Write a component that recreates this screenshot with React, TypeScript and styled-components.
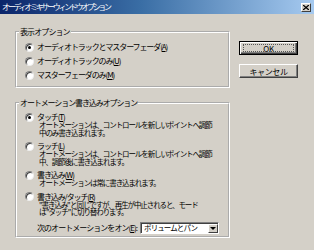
import React from "react";
import styled, { createGlobalStyle } from "styled-components";

const GlobalStyle = createGlobalStyle`
  html, body {
    margin: 0;
    padding: 0;
    background: #d4d0c8;
  }
`;

const Window = styled.div`
  width: 314px;
  height: 250px;
  background: #d4d0c8;
  font-family: "Noto Sans CJK JP", "Noto Sans", sans-serif;
  color: #000;
  overflow: hidden;
`;

const TitleBar = styled.div`
  height: 14px;
  display: flex;
  align-items: center;
  justify-content: space-between;
  padding: 0 3px 0 2px;
  background: linear-gradient(90deg, #0a246a 0%, #3a6ea5 45%, #a6caf0 100%);
  color: #fff;
  font-size: 8px;
  line-height: 14px;
  letter-spacing: -2.3px;
`;

const CloseBtn = styled.div`
  width: 10px;
  height: 9px;
  box-sizing: border-box;
  background: #d4d0c8;
  border: 1px solid;
  border-color: #fff #404040 #404040 #fff;
  display: flex;
  align-items: center;
  justify-content: center;
`;

const Body = styled.div`
  display: flex;
  align-items: flex-start;
  padding: 13px 0 0 15px;
`;

const Column = styled.div`
  display: flex;
  flex-direction: column;
  gap: 10px;
`;

const Group = styled.fieldset<{ $pb: number; $pt: number }>`
  width: 215px;
  box-sizing: border-box;
  margin: 0;
  padding: ${(p) => p.$pt}px 4px ${(p) => p.$pb}px 8px;
  border: 2px groove #fff;
  min-inline-size: 0;
`;

const Legend = styled.legend<{ $ls: number }>`
  font-size: 8px;
  line-height: 10px;
  padding: 0 1px;
  margin-left: -6px;
  letter-spacing: ${(p) => p.$ls}px;
`;

const Row = styled.div<{ $h: number }>`
  height: ${(p) => p.$h}px;
  line-height: ${(p) => p.$h}px;
  display: flex;
  align-items: center;
  gap: 3px;
  font-size: 8px;
  letter-spacing: -1.1px;
  white-space: nowrap;
`;

const Radio = styled.span<{ $on?: boolean }>`
  width: 9px;
  height: 9px;
  box-sizing: border-box;
  flex: none;
  border-radius: 50%;
  background: #fff;
  border: 1px solid;
  border-color: #808080 #eee #eee #808080;
  box-shadow: inset 1px 1px 0 #404040;
  display: flex;
  align-items: center;
  justify-content: center;

  &::after {
    content: "";
    width: 3px;
    height: 3px;
    border-radius: 50%;
    background: ${(p) => (p.$on ? "#000" : "transparent")};
  }
`;

const Item = styled.div`
  display: flex;
  flex-direction: column;
  & + & {
    margin-top: 6px;
  }
`;

const Desc = styled.div`
  margin-left: 14px;
  font-size: 7.5px;
  line-height: 7.5px;
  letter-spacing: -1.1px;
  white-space: nowrap;
`;

const NextRow = styled.div`
  margin-top: 6px;
  padding-left: 12px;
  display: flex;
  align-items: center;
  gap: 3px;
  font-size: 8px;
  line-height: 12px;
  white-space: nowrap;
`;

const NextLabel = styled.span`
  letter-spacing: -0.95px;
`;

const Select = styled.div`
  width: 79px;
  height: 12px;
  box-sizing: border-box;
  background: #fff;
  border: 1px solid;
  border-color: #808080 #fff #fff #808080;
  box-shadow: inset 1px 1px 0 #404040;
  display: flex;
  align-items: center;
  justify-content: space-between;
  padding: 1px 0 0 3px;
  font-size: 7.5px;
  letter-spacing: -0.9px;
  overflow: hidden;
`;

const ArrowBtn = styled.span`
  width: 10px;
  height: 9px;
  box-sizing: border-box;
  flex: none;
  background: #d4d0c8;
  border: 1px solid;
  border-color: #fff #404040 #404040 #fff;
  display: flex;
  align-items: center;
  justify-content: center;
  &::after {
    content: "";
    border-left: 3px solid transparent;
    border-right: 3px solid transparent;
    border-top: 3px solid #000;
  }
`;

const Buttons = styled.div`
  display: flex;
  flex-direction: column;
  gap: 9px;
  margin: 14px 0 0 9px;
`;

const Button = styled.div<{ $default?: boolean }>`
  width: 59px;
  height: 14px;
  box-sizing: border-box;
  background: #d4d0c8;
  border: 1px solid ${(p) => (p.$default ? "#000" : "#fff")};
  ${(p) =>
    p.$default
      ? "box-shadow: inset 1px 1px 0 #fff, inset -1px -1px 0 #404040, inset -2px -2px 0 #808080;"
      : "border-color: #fff #404040 #404040 #fff; box-shadow: inset -1px -1px 0 #808080;"}
  display: flex;
  align-items: center;
  justify-content: center;
  font-size: 8px;
  letter-spacing: -0.4px;
  position: relative;
`;

const Focus = styled.span`
  position: absolute;
  inset: 2px 3px 2px 3px;
  border: 1px dotted #555;
`;

const U = styled.span`
  text-decoration: underline;
`;

const options2 = [
  {
    label: "タッチ",
    key: "T",
    on: true,
    desc: ["オートメーションは、コントロールを新しいポイントへ調節", "中のみ書き込まれます。"],
  },
  {
    label: "ラッチ",
    key: "L",
    on: false,
    desc: ["オートメーションは、コントロールを新しいポイントへ調節", "中、調節後に書き込まれます。"],
  },
  {
    label: "書き込み",
    key: "W",
    on: false,
    desc: ["オートメーションは常に書き込まれます。"],
  },
  {
    label: "書き込み/タッチ",
    key: "R",
    on: false,
    desc: ["\"書き込み\" と同じですが、再生が中止されると、モード", "は \"タッチ\" に切り替わります。"],
  },
];

export default function App() {
  return (
    <Window>
      <GlobalStyle />
      <TitleBar>
        <span>オーディオミキサーウィンドウオプション</span>
        <CloseBtn>
          <svg width="6" height="5" viewBox="0 0 6 5">
            <path d="M0 0L6 5M6 0L0 5" stroke="#000" strokeWidth="1.3" />
          </svg>
        </CloseBtn>
      </TitleBar>
      <Body>
        <Column>
          <Group $pt={3} $pb={4}>
            <Legend $ls={-0.9}>表示オプション</Legend>
            <Row $h={14}>
              <Radio $on />
              <span>
                オーディオトラックとマスターフェーダ(<U>A</U>)
              </span>
            </Row>
            <Row $h={14}>
              <Radio />
              <span>
                オーディオトラックのみ(<U>U</U>)
              </span>
            </Row>
            <Row $h={14}>
              <Radio />
              <span>
                マスターフェーダのみ(<U>M</U>)
              </span>
            </Row>
          </Group>
          <Group $pt={5} $pb={2}>
            <Legend $ls={-1.1}>オートメーション書き込みオプション</Legend>
            {options2.map((o) => (
              <Item key={o.key}>
                <Row $h={8}>
                  <Radio $on={o.on} />
                  <span>
                    {o.label}(<U>{o.key}</U>)
                  </span>
                </Row>
                <Desc>
                  {o.desc.map((d) => (
                    <div key={d}>{d}</div>
                  ))}
                </Desc>
              </Item>
            ))}
            <NextRow>
              <NextLabel>
                次のオートメーションをオン(<U>E</U>):
              </NextLabel>
              <Select>
                <span>ボリュームとパン</span>
                <ArrowBtn />
              </Select>
            </NextRow>
          </Group>
        </Column>
        <Buttons>
          <Button $default>
            OK
            <Focus />
          </Button>
          <Button>キャンセル</Button>
        </Buttons>
      </Body>
    </Window>
  );
}
